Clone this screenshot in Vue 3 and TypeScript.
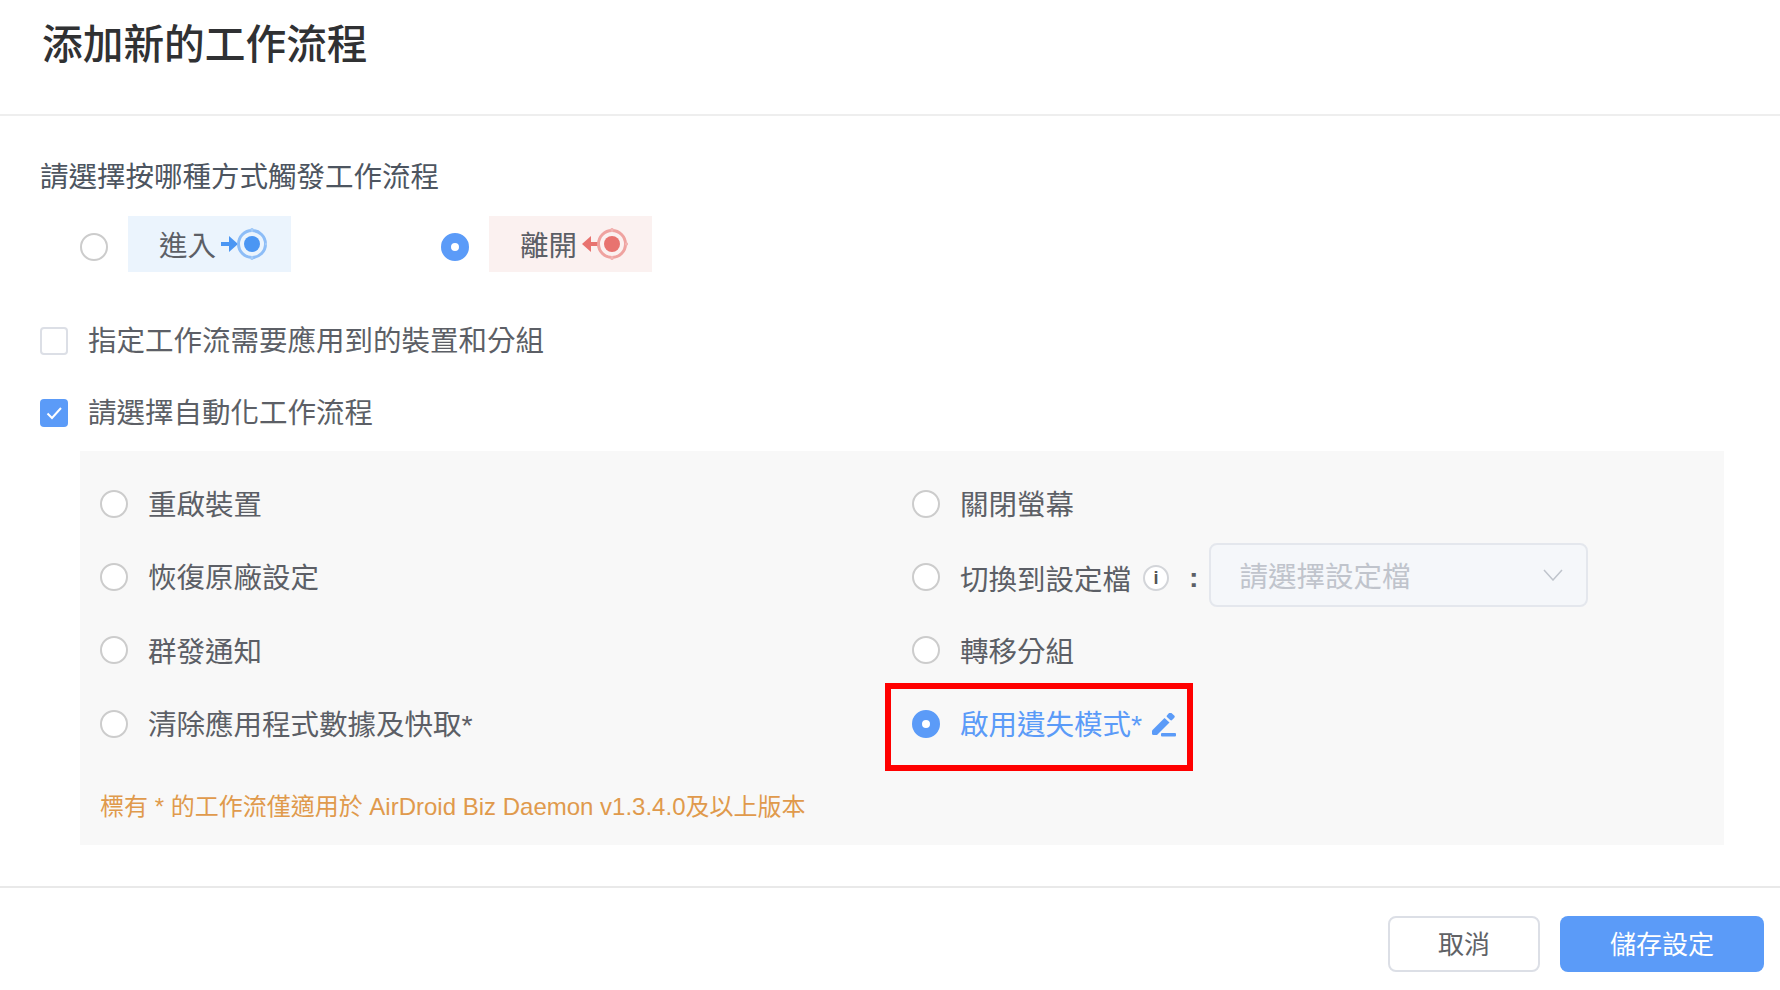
<script setup lang="ts">
import { ref } from "vue";

const actions = [
  { id: "reboot", label: "重啟裝置" },
  { id: "screen", label: "關閉螢幕" },
  { id: "reset", label: "恢復原廠設定" },
  { id: "profile", label: "切換到設定檔" },
  { id: "notify", label: "群發通知" },
  { id: "group", label: "轉移分組" },
  { id: "clear", label: "清除應用程式數據及快取*" },
  { id: "lost", label: "啟用遺失模式*" },
];

const trigger = ref("leave");
const action = ref("lost");
const limitDevices = ref(false);
const useAction = ref(true);
</script>

<template>
  <div class="dialog">
    <header class="head">
      <h1>添加新的工作流程</h1>
    </header>

    <main class="body">
      <p class="section-label">請選擇按哪種方式觸發工作流程</p>

      <div class="triggers">
        <div class="trigger" @click="trigger = 'enter'">
          <span class="radio" :class="{ on: trigger === 'enter' }"></span>
          <div class="tag tag--blue">
            <span>進入</span>
            <svg class="geo" viewBox="0 0 46 32" fill="none" stroke="#4b96f3">
              <path d="M0 16h10" stroke-width="4" />
              <path d="M8 8l9 8-9 8z" fill="#4b96f3" stroke="none" />
              <circle cx="31" cy="16" r="13.5" stroke-width="3" stroke="#8dbdf7" />
              <circle cx="31" cy="16" r="8" fill="#4b96f3" stroke="none" />
              <path d="M31 0v4M31 28v4M44 16h2" stroke-width="2.5" stroke="#a5ccf8" />
            </svg>
          </div>
        </div>
        <div class="trigger" @click="trigger = 'leave'">
          <span class="radio" :class="{ on: trigger === 'leave' }"></span>
          <div class="tag tag--red">
            <span>離開</span>
            <svg class="geo" viewBox="0 0 46 32" fill="none" stroke="#e8736f">
              <path d="M7 16h10" stroke-width="4" />
              <path d="M9 8l-9 8 9 8z" fill="#e8736f" stroke="none" />
              <circle cx="30" cy="16" r="13.5" stroke-width="3" stroke="#efa3a0" />
              <circle cx="30" cy="16" r="8" fill="#e8736f" stroke="none" />
              <path d="M30 0v4M30 28v4M43 16h3" stroke-width="2.5" stroke="#f2b5b3" />
            </svg>
          </div>
        </div>
      </div>

      <label class="check first" @click.prevent="limitDevices = !limitDevices">
        <span class="box" :class="{ on: limitDevices }"></span>
        指定工作流需要應用到的裝置和分組
      </label>

      <label class="check second" @click.prevent="useAction = !useAction">
        <span class="box" :class="{ on: useAction }">
          <svg v-if="useAction" viewBox="0 0 28 28" fill="none" stroke="#fff" stroke-width="2">
            <path d="M7.5 14.5l4.5 4.5 9-10" />
          </svg>
        </span>
        請選擇自動化工作流程
      </label>

      <section class="panel">
        <div class="grid">
          <div
            v-for="item in actions"
            :key="item.id"
            class="option"
            :class="{ active: action === item.id, 'option--profile': item.id === 'profile' }"
          >
            <span class="radio" :class="{ on: action === item.id }" @click="action = item.id"></span>
            <span class="option-text">{{ item.label }}</span>

            <template v-if="item.id === 'profile'">
              <span class="info">i</span>
              <span class="colon">:</span>
              <div class="select">
                <span>請選擇設定檔</span>
                <svg width="20" height="12" viewBox="0 0 20 12" fill="none" stroke="#bfc4cc" stroke-width="1.5">
                  <path d="M1 1l9 10 9-10" />
                </svg>
              </div>
            </template>

            <svg v-if="item.id === 'lost'" class="pencil" viewBox="0 0 25 24" fill="#5b9bf8">
              <path d="M1 17.5L13.5 5l5 4.500L6 22H2.500Q1 22 1 20.500z" />
              <rect x="16.200" y="0.400" width="7" height="6" rx="1.500" transform="rotate(42 19.700 3.400)" />
              <rect x="10" y="20" width="15" height="3.500" rx="1" />
            </svg>

            <span v-if="item.id === 'lost'" class="highlight"></span>
          </div>
        </div>
        <p class="note">標有 * 的工作流僅適用於 AirDroid Biz Daemon v1.3.4.0及以上版本</p>
      </section>
    </main>

    <footer class="foot">
      <button class="btn">取消</button>
      <button class="btn btn--primary">儲存設定</button>
    </footer>
  </div>
</template>

<style>
html,
body {
  background: #fff;
}
</style>

<style scoped>
.dialog {
  width: 1780px;
  height: 990px;
  overflow: hidden;
  font-family: "Liberation Sans", "Noto Sans CJK TC", sans-serif;
  color: #5c5f66;
  font-size: 28.5px;
}

.head {
  height: 116px;
  box-sizing: border-box;
  border-bottom: 2px solid #eeeeee;
  padding: 22px 42px 0;
}

h1 {
  margin: 0;
  font-size: 40.700px;
  line-height: 46px;
  font-weight: 500;
  color: #303133;
}

.body {
  height: 770px;
  padding: 0 56px 0 40px;
}

.section-label {
  margin: 0;
  padding-top: 43px;
  line-height: 36px;
  color: #4d5560;
}

.triggers {
  display: flex;
  margin-top: 21px;
  padding-left: 40px;
  gap: 150px;
}

.trigger {
  display: flex;
  align-items: center;
  gap: 20px;
}

.radio {
  position: relative;
  flex: none;
  box-sizing: border-box;
  width: 28px;
  height: 28px;
  border: 2px solid #cccccc;
  border-radius: 50%;
  background: #fff;
}

.radio.on {
  border: 10px solid #5b9bf8;
}

.trigger .radio {
  top: 3px;
}

.tag {
  display: flex;
  align-items: center;
  gap: 5px;
  box-sizing: border-box;
  width: 163px;
  height: 56px;
  padding-left: 31px;
}

.tag span {
  margin-bottom: 2px;
}

.tag--blue {
  background: #ebf4fd;
}

.tag--red {
  background: #fbf1f0;
}

.geo {
  width: 46px;
  height: 32px;
}

.check {
  display: flex;
  align-items: center;
  gap: 20px;
  height: 36px;
  line-height: 36px;
}

.check.first {
  margin-top: 51px;
}

.check.second {
  margin-top: 36px;
}

.box {
  flex: none;
  box-sizing: border-box;
  width: 28px;
  height: 28px;
  border: 2px solid #dcdfe6;
  border-radius: 4px;
  background: #fff;
}

.box.on {
  border: 0;
  background: #5b9bf8;
}

.box svg {
  display: block;
  width: 28px;
  height: 28px;
}

.panel {
  height: 394px;
  margin: 20px 0 0 40px;
  padding: 16px 20px 0;
  box-sizing: border-box;
  background: #f8f8f8;
}

.grid {
  display: grid;
  grid-template-columns: 812px 1fr;
  grid-auto-rows: 73.300px;
}

.option {
  position: relative;
  display: flex;
  align-items: center;
  gap: 20px;
}

.option-text {
  margin-bottom: 2px;
}

.option--profile .option-text {
  margin: 2px 0 0;
}

.option.active .option-text {
  color: #5b9bf8;
}

.info {
  flex: none;
  box-sizing: border-box;
  width: 26px;
  height: 26px;
  margin: 3px 0 0 -8px;
  border: 2px solid #d3d5d9;
  border-radius: 50%;
  background: #fff;
  color: #555;
  font-size: 18px;
  font-weight: 700;
  line-height: 22px;
  text-align: center;
}

.colon {
  margin-top: 1px;
  font-weight: 700;
}

.select {
  display: flex;
  align-items: center;
  justify-content: space-between;
  position: relative;
  top: -2px;
  box-sizing: border-box;
  width: 379px;
  height: 64px;
  margin-left: -10px;
  padding: 0 23px 0 29px;
  border: 2px solid #e4e7ed;
  border-radius: 8px;
  background: #f5f7fa;
  color: #c0c4cc;
}

.pencil {
  width: 25px;
  height: 24px;
  margin: 2px 0 0 -11px;
}

.highlight {
  position: absolute;
  left: -27px;
  top: -4px;
  width: 308px;
  height: 88px;
  box-sizing: border-box;
  border: 6px solid #ff0000;
  pointer-events: none;
}

.note {
  margin: 32px 0 0;
  font-size: 24px;
  line-height: 30px;
  color: #e09a4c;
}

.foot {
  display: flex;
  justify-content: flex-end;
  gap: 20px;
  height: 104px;
  padding: 28px 16px 0 0;
  box-sizing: border-box;
  border-top: 2px solid #e9e9e9;
}

.btn {
  width: 152px;
  height: 56px;
  padding: 0 0 4px;
  border: 2px solid #dcdfe6;
  border-radius: 8px;
  background: #fff;
  color: #606266;
  font: inherit;
  font-size: 26px;
  cursor: pointer;
}

.btn--primary {
  width: 204px;
  border: 0;
  background: #5b9bf8;
  color: #fff;
}
</style>
